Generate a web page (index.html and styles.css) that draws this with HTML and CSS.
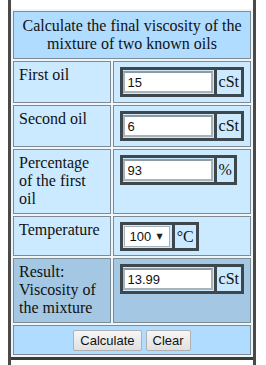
FILE: index.html
```html
<!DOCTYPE html>
<html lang="en">
<head>
    <meta charset="UTF-8">
    <meta name="viewport" content="width=device-width, initial-scale=1.0">
    <title>Viscosity of a mixture</title>
    <link rel="stylesheet" href="styles.css">
</head>
<body>

<div class="frame">
    <table class="calc">
        <tr class="head">
            <td class="title" colspan="2">Calculate the final viscosity of the mixture of two known oils</td>
        </tr>
        <tr class="short">
            <td class="label">First oil</td>
            <td class="value">
                <div class="field">
                    <input type="text" id="oil1" value="15">
                    <span class="unit">cSt</span>
                </div>
            </td>
        </tr>
        <tr class="short">
            <td class="label">Second oil</td>
            <td class="value">
                <div class="field">
                    <input type="text" id="oil2" value="6">
                    <span class="unit">cSt</span>
                </div>
            </td>
        </tr>
        <tr class="tall">
            <td class="label">Percentage of the first oil</td>
            <td class="value">
                <div class="field">
                    <input type="text" id="percent" value="93">
                    <span class="unit">%</span>
                </div>
            </td>
        </tr>
        <tr class="temp">
            <td class="label">Temperature</td>
            <td class="value">
                <div class="field">
                    <span class="picker">
                        <select id="temp">
                            <option>40</option>
                            <option selected>100</option>
                        </select>
                        <span class="arrow">&#9660;</span>
                    </span>
                    <span class="unit">&deg;C</span>
                </div>
            </td>
        </tr>
        <tr class="tall result">
            <td class="label">Result: Viscosity of the mixture</td>
            <td class="value">
                <div class="field">
                    <input type="text" id="result" value="13.99">
                    <span class="unit">cSt</span>
                </div>
            </td>
        </tr>
        <tr class="foot">
            <td class="actions" colspan="2">
                <button type="button">Calculate</button>
                <button type="button">Clear</button>
            </td>
        </tr>
    </table>
    <div class="rule"></div>
</div>

</body>
</html>
```

FILE: styles.css
```css
body {
    margin: 0;
    background: white;
    font-family: "Liberation Serif", "Times New Roman", serif;
    color: #111;
}
.frame {
    margin-left: 8px;
    width: 242px;
    min-height: 356px;
    padding-top: 9px;
    border-left: 3px solid #4a4a4a;
    border-right: 3px solid #4a4a4a;
}
.calc {
    width: 242px;
    border-spacing: 2px;
    background: #eef6fc;
    font-size: 16px;
    line-height: 18px;
}
.calc td {
    border: 1px solid #7d8b94;
    vertical-align: top;
}
.head { height: 48px; }
.short { height: 42px; }
.tall { height: 65px; }
.temp { height: 40px; }
.foot { height: 30px; }
.title {
    background: #b0dcff;
    text-align: center;
    padding: 5px 4px 3px;
}
.label {
    width: 86px;
    background: #cceaff;
    padding: 4px 5px 3px;
}
.value {
    background: #cceaff;
    padding: 5px 6px 0;
}
.result .label,
.result .value {
    background: #a4c8e4;
}
.field {
    display: inline-flex;
    align-items: stretch;
    border: 3px solid #3d474c;
    background: #cceaff;
}
.field input {
    width: 90px;
    height: 22px;
    box-sizing: border-box;
    margin: 1px 1px 1px 0;
    padding: 1px 3px;
    border: 2px solid #a7b4bc;
    border-top-color: #8d9aa2;
    background: white;
    font-family: "Liberation Sans", Arial, sans-serif;
    font-size: 13px;
    color: #111;
}
.picker {
    display: inline-flex;
    align-items: center;
    box-sizing: border-box;
    height: 21px;
    margin: 1px 2px 1px 1px;
    padding: 0 6px 0 0;
    border: 1px solid #a7b4bc;
    background: white;
}
.picker select {
    appearance: none;
    -webkit-appearance: none;
    height: 19px;
    border: none;
    padding: 0 5px;
    background: transparent;
    font-family: "Liberation Sans", Arial, sans-serif;
    font-size: 13px;
    color: #111;
}
.arrow {
    font-family: "DejaVu Sans", sans-serif;
    font-size: 8px;
    line-height: 10px;
    color: #222;
}
.unit {
    display: flex;
    align-items: center;
    padding: 0 2px;
    border-left: 3px solid #3d474c;
    font-size: 16px;
}
.calc .actions {
    background: #b0dcff;
    text-align: center;
    vertical-align: middle;
    padding: 0 4px;
}
.actions button {
    font-family: "Liberation Sans", Arial, sans-serif;
    font-size: 13px;
    padding: 1px 6px;
    height: 21px;
    color: #111;
    background: linear-gradient(#f6f6f6, #e0e0e0);
    border: 1px solid #b0b0b0;
    border-radius: 2px;
}
.rule {
    border-top: 3px solid #3a3a3a;
}
```
